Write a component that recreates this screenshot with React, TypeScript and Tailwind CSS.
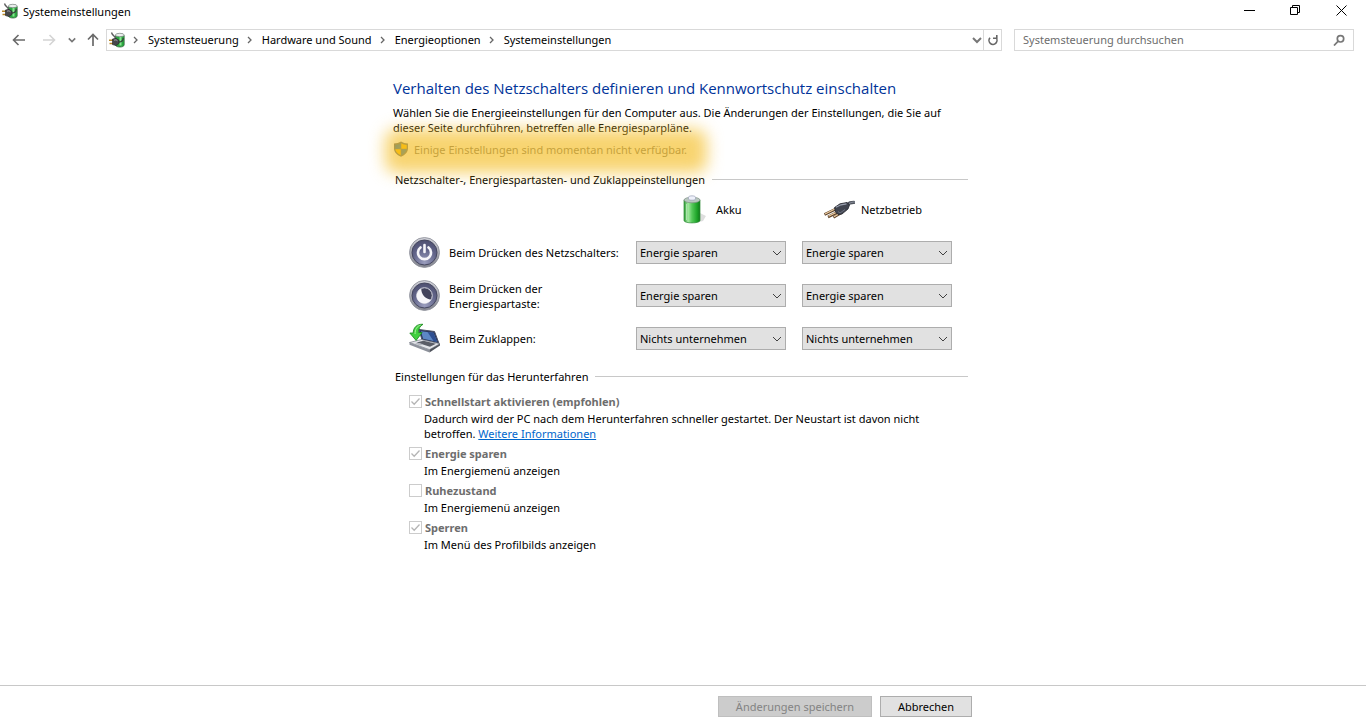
import { useState } from "react";
import type { ReactNode } from "react";

const breadcrumbs = ["Systemsteuerung", "Hardware und Sound", "Energieoptionen", "Systemeinstellungen"];

const actions = ["Nichts unternehmen", "Energie sparen", "Ruhezustand", "Herunterfahren"];

const PowerOptionsIcon = () => (
    <svg className="size-4 shrink-0" viewBox="0 0 16 16" aria-hidden="true">
        <path d="M6.500 3.500h8.700v9.300c0 3-8.700 3-8.700 0z" fill="#2aa63f" stroke="#2f5a37" strokeWidth=".7" />
        <path d="M10.500 4.500h2v9h-2z" fill="#86e68f" />
        <ellipse cx="10.800" cy="3" rx="4.400" ry="1.700" fill="#e9eeec" stroke="#777f7c" strokeWidth=".7" />
        <path d="M2.500.5C3 2.500 4 3.200 5 4s1.500 2 1.500 3" fill="none" stroke="#5c5c5c" strokeWidth="1.300" />
        <path d="M0 8.300h4M.5 11.500h4" stroke="#b8892b" strokeWidth="1.500" />
        <path d="M3.500 7 7 6.300l3 2v3l-3 2.300-3.500-1z" fill="#46474b" stroke="#222" strokeWidth=".6" />
        <path d="M10 10c2.500 0 4-1 4.300-4" fill="none" stroke="#37403a" strokeWidth="1.300" />
        <path d="m5 8.200 2-.4 1.500 1" fill="none" stroke="#a9a9ae" strokeWidth=".9" />
    </svg>
);

const ShieldIcon = () => (
    <svg className="h-4 w-4 shrink-0" viewBox="0 0 16 16" aria-hidden="true">
        <path d="M8 .5c2 1.300 4.200 1.900 7 2v5c0 3.500-2.800 6.500-7 8.300C3.800 14 1 11 1 7.500v-5c2.800-.1 5-.7 7-2z" fill="#5d6a72" />
        <path d="M7.700 2.200v5.500H2.300V3.900c2-.1 3.800-.6 5.400-1.700z" fill="#1f6fb5" />
        <path d="M8.300 2.200v5.500h5.400V3.900c-2-.1-3.800-.6-5.400-1.700z" fill="#ffbe00" />
        <path d="M7.700 8.300v5.900c-3.200-1.500-5.100-3.500-5.400-5.900z" fill="#ffbe00" />
        <path d="M8.300 8.300v5.900c3.200-1.500 5.100-3.500 5.400-5.900z" fill="#1f6fb5" />
    </svg>
);

const BatteryIcon = () => (
    <svg className="size-8 shrink-0" viewBox="0 0 32 32" aria-hidden="true">
        <defs>
            <linearGradient id="battery" x1="0" x2="1">
                <stop offset="0" stopColor="#2d9a35" />
                <stop offset=".25" stopColor="#a5eaa2" />
                <stop offset=".5" stopColor="#55c95a" />
                <stop offset=".8" stopColor="#1fa52a" />
                <stop offset="1" stopColor="#0f7a1a" />
            </linearGradient>
        </defs>
        <path d="m24 20 6 3-3 5-8 2z" fill="#000" opacity=".13" />
        <path d="M8 7v20.500c0 3.200 16 3.200 16 0V7z" fill="url(#battery)" stroke="#2b8a34" strokeWidth=".7" />
        <ellipse cx="16" cy="7" rx="8" ry="2.800" fill="#b9c7c0" stroke="#7f9085" strokeWidth=".7" />
        <path d="M12.500 6V4.200c0-1.800 7-1.800 7 0V6c0 1.600-7 1.600-7 0z" fill="#eef0fa" stroke="#9aa0b5" strokeWidth=".7" />
        <path d="M10.500 11v16" stroke="#d0f5cf" strokeWidth="1" opacity=".6" />
    </svg>
);

const PlugIcon = () => (
    <svg className="size-8 shrink-0" viewBox="0 0 32 32" aria-hidden="true">
        <path d="M14 15.500 1.500 21.500M17 18 5 24M19 19.500l-8.500 5" stroke="#5e432c" strokeWidth="2.600" />
        <path d="M14 15 2 21M17 17.500 5.500 23.300M19 19l-8 4.800" stroke="#efcfa2" strokeWidth="1.200" />
        <path d="M22 13c3-1.500 3-4 10-3.500" fill="none" stroke="#50555e" strokeWidth="3.200" />
        <path d="m11.500 14.500 5.500-3.700 7-1.300 2.500 2.500-1.500 4-6 5-4 .5-2.500-2.500z" fill="#40444f" stroke="#22252c" strokeWidth=".8" />
        <path d="m13 14.300 5-2.500 5.500-1" fill="none" stroke="#9aa0af" strokeWidth="1.200" />
        <path d="M15 18.500 17 20l5-3.500" fill="none" stroke="#6b7080" strokeWidth="1" />
        <path d="M26 10.500c2-1 3.500-1.500 6-1.500" fill="none" stroke="#9aa0af" strokeWidth=".8" />
    </svg>
);

const RoundButtonBase = ({ children }: { children: ReactNode }) => (
    <svg className="size-8 shrink-0" viewBox="0 0 32 32" aria-hidden="true">
        <defs>
            <linearGradient id="rim" x1="0" y1="0" x2="0" y2="1">
                <stop offset="0" stopColor="#d0d1d8" />
                <stop offset="1" stopColor="#83858f" />
            </linearGradient>
            <radialGradient id="face" cx=".5" cy=".9" r=".85">
                <stop offset="0" stopColor="#9a9dbd" />
                <stop offset=".6" stopColor="#62658a" />
                <stop offset="1" stopColor="#505273" />
            </radialGradient>
        </defs>
        <circle cx="15.500" cy="15.500" r="15" fill="url(#rim)" stroke="#8c8e98" strokeWidth=".8" />
        <circle cx="15.500" cy="15.500" r="12.500" fill="url(#face)" stroke="#44465f" strokeWidth="1" />
        {children}
    </svg>
);

const PowerButtonIcon = () => (
    <RoundButtonBase>
        <path d="M11.500 10.500a6.500 6.500 0 1 0 8 0" fill="none" stroke="#f6f6fa" strokeWidth="2.600" strokeLinecap="round" />
        <path d="M15.500 8v7" stroke="#f6f6fa" strokeWidth="2.600" strokeLinecap="round" />
    </RoundButtonBase>
);

const SleepButtonIcon = () => (
    <RoundButtonBase>
        <circle cx="15.500" cy="15.500" r="7.800" fill="#41435c" stroke="#d5d6df" strokeWidth="1" />
        <path d="M12.300 8.500c-5.300 2.700-6.200 9.500-2.200 13 3.800 3.200 9.500 2.200 12-1.800-5.500-.6-10-5-9.800-11.200z" fill="#f6f6fa" />
    </RoundButtonBase>
);

const LidIcon = () => (
    <svg className="size-8 shrink-0" viewBox="0 0 32 32" aria-hidden="true">
        <path d="m10 6.500 15.500 2 4.500 12-17-3.500z" fill="#28355b" stroke="#4a5066" strokeWidth="1" />
        <path d="m12 8.200 12.500 1.500 3.500 9-14-3z" fill="#5d87c5" />
        <path d="m18.500 9 6 .7 3.500 9-3.500-.7z" fill="#2e4f92" />
        <path d="m.5 19.500 12-3 18.500 4.200-10.500 6z" fill="#e2e4e9" stroke="#767a84" strokeWidth=".7" />
        <path d="m7.500 19.500 7-1.800 12.500 3-6 3z" fill="#5a5d67" />
        <path d="m6 20.800 5.500 1.600 3-1.200-6-1.400z" fill="#b5b8c0" />
        <path d="M.5 19.500v2.200l20 7.800v-2.800z" fill="#8d919b" />
        <path d="m20.500 26.700 10.500-6v1.700l-10.500 7z" fill="#50545d" />
        <path d="M14 1.300C8 .8 4.200 4.500 4.200 10H.8l6.300 7.500 6-8H9.300C9.400 6 11 3 14 1.300z" fill="#42d040" stroke="#16851a" strokeWidth=".8" />
        <path d="M11.500 2.200C8 3 6 6.500 6.100 11" fill="none" stroke="#a5f09a" strokeWidth="1" />
    </svg>
);

const ChevronDown = ({ className }: { className?: string }) => (
    <svg className={className} viewBox="0 0 10 10" fill="none" stroke="currentColor" aria-hidden="true">
        <path d="m1 3 4 4 4-4" />
    </svg>
);

const ActionSelect = ({ label, initial }: { label: string; initial: string }) => {
    const [value, setValue] = useState(initial);

    return (
        <div className="relative w-[150px]">
            <select
                aria-label={label}
                value={value}
                onChange={(e) => setValue(e.target.value)}
                className="block h-[23px] w-full appearance-none border border-[#adadad] bg-[#e1e1e1] pr-5 pl-[3px] text-[11px] leading-[15px]"
            >
                {actions.map((action) => (
                    <option key={action}>{action}</option>
                ))}
            </select>
            <ChevronDown className="pointer-events-none absolute top-[7px] right-1 size-[10px] text-[#404040]" />
        </div>
    );
};

const SectionTitle = ({ children }: { children: ReactNode }) => (
    <div className="flex items-center gap-[7px] pr-[5px] pl-[2px]">
        <h2>{children}</h2>
        <div className="h-px flex-1 bg-[#c8c8c8]" />
    </div>
);

const ButtonRow = ({ icon, label, initial }: { icon: ReactNode; label: string; initial: string }) => (
    <div className="grid h-[43px] grid-cols-[40px_187px_166px_150px] items-center">
        {icon}
        <p className="max-w-[175px] pr-1">{label}</p>
        <ActionSelect label={`${label} Akku`} initial={initial} />
        <ActionSelect label={`${label} Netzbetrieb`} initial={initial} />
    </div>
);

const ShutdownOption = ({
    id,
    label,
    checked,
    children,
}: {
    id: string;
    label: string;
    checked: boolean;
    children: ReactNode;
}) => (
    <div>
        <div className="flex h-[17px] items-center gap-[3px]">
            <span className="relative size-[13px]">
                <input
                    id={id}
                    type="checkbox"
                    defaultChecked={checked}
                    disabled
                    className="peer block size-[13px] appearance-none border border-[#cccccc] bg-white"
                />
                <svg
                    className="pointer-events-none absolute inset-0 hidden peer-checked:block"
                    viewBox="0 0 13 13"
                    fill="none"
                    stroke="#b5b5b5"
                    strokeWidth="1.300"
                    aria-hidden="true"
                >
                    <path d="m2.500 6.500 2.700 2.700L10.500 3.500" />
                </svg>
            </span>
            <label htmlFor={id} className="font-bold text-[#6d6d6d]">
                {label}
            </label>
        </div>
        <p className="mt-px pl-[15px]">{children}</p>
    </div>
);

const TitleBar = () => (
    <header className="flex h-6 items-start justify-between pr-[2px] pl-[2px]">
        <div className="flex items-center gap-[5px] pt-[3px]">
            <PowerOptionsIcon />
            <h1>Systemeinstellungen</h1>
        </div>
        <div className="flex h-[21px]">
            <button aria-label="Minimieren" className="flex w-[46px] items-center justify-center">
                <svg className="size-[11px]" viewBox="0 0 11 11" stroke="#000">
                    <path d="M0 5.500h11" />
                </svg>
            </button>
            <button aria-label="Verkleinern" className="flex w-[46px] items-center justify-center">
                <svg className="size-[11px]" viewBox="0 0 11 11" fill="none" stroke="#000">
                    <path d="M.5 2.500h7v7h-7zM2.500 2.500v-2h7v7h-2" />
                </svg>
            </button>
            <button aria-label="Schließen" className="flex w-[46px] items-center justify-center">
                <svg className="size-[11px]" viewBox="0 0 11 11" stroke="#000">
                    <path d="m.5.5 10 10M10.500.5l-10 10" />
                </svg>
            </button>
        </div>
    </header>
);

const AddressBar = () => (
    <nav className="mt-[5px] flex h-[22px] items-center pr-3 pl-3">
        <button aria-label="Zurück" className="text-[#6a6a6a]">
            <svg className="h-3 w-[14px]" viewBox="0 0 14 12" fill="none" stroke="currentColor" strokeWidth="1.600">
                <path d="M13 6H1.500M6.500 1l-5 5 5 5" />
            </svg>
        </button>
        <button aria-label="Vorwärts" disabled className="ml-4 text-[#d4d4d4]">
            <svg className="h-3 w-[14px]" viewBox="0 0 14 12" fill="none" stroke="currentColor" strokeWidth="1.600">
                <path d="M1 6h11.500M7.500 1l5 5-5 5" />
            </svg>
        </button>
        <button aria-label="Zuletzt besuchte Seiten" className="ml-3 text-[#777777]">
            <ChevronDown className="size-2 stroke-2" />
        </button>
        <button aria-label="Nach oben" className="ml-[11px] text-[#6a6a6a]">
            <svg className="h-[14px] w-3" viewBox="0 0 12 14" fill="none" stroke="currentColor" strokeWidth="1.700">
                <path d="M6 13V1.500M1 6.500l5-5 5 5" />
            </svg>
        </button>
        <div className="ml-[7px] flex h-full flex-1 items-center border border-[#d9d9d9] pl-[2px]">
            <PowerOptionsIcon />
            <ol className="flex flex-1 pb-px">
                {breadcrumbs.map((crumb) => (
                    <li key={crumb} className="flex items-center">
                        <svg
                            className="mr-2 ml-[7px] size-2"
                            viewBox="0 0 8 8"
                            fill="none"
                            stroke="#666"
                            strokeWidth="1.300"
                            aria-hidden="true"
                        >
                            <path d="m2 1 3 3-3 3" />
                        </svg>
                        <a href="#">{crumb}</a>
                    </li>
                ))}
            </ol>
            <button aria-label="Verlauf" className="mr-px text-[#777777]">
                <ChevronDown className="size-[10px] stroke-2" />
            </button>
            <button aria-label="Aktualisieren" className="flex h-full w-[18px] items-center justify-center border-l border-[#d9d9d9]">
                <svg className="size-3" viewBox="0 0 12 12" fill="none" stroke="#666" strokeWidth="1.600">
                    <path d="M3 3.700A4 4 0 1 0 8.800 3.500M9.800 1v3.300H6" />
                </svg>
            </button>
        </div>
        <div className="ml-3 flex h-full w-[340px] items-center border border-[#d9d9d9] pr-2 pl-2">
            <input
                type="search"
                aria-label="Systemsteuerung durchsuchen"
                placeholder="Systemsteuerung durchsuchen"
                className="h-full min-w-0 flex-1 pb-px outline-none placeholder:text-[#6d6d6d]"
            />
            <svg className="size-3" viewBox="0 0 12 12" fill="none" stroke="#777" strokeWidth="1.700" aria-hidden="true">
                <circle cx="7.500" cy="4.800" r="3.200" />
                <path d="M5.200 7.200 1 11.500" />
            </svg>
        </div>
    </nav>
);

const App = () => {
    return (
        <div className="flex min-h-screen flex-col bg-white font-['Noto_Sans','Open_Sans',sans-serif] text-[11px] leading-[15px] text-black">
            <TitleBar />
            <AddressBar />

            <main className="mx-auto w-full max-w-[580px] flex-1 pt-[26px]">
                <h2 className="font-['Open_Sans','Noto_Sans',sans-serif] text-[15px] leading-[22px] text-[#003399]">
                    Verhalten des Netzschalters definieren und Kennwortschutz einschalten
                </h2>
                <p className="mt-[6px] pr-1">
                    Wählen Sie die Energieeinstellungen für den Computer aus. Die Änderungen der Einstellungen, die Sie
                    auf dieser Seite durchführen, betreffen alle Energiesparpläne.
                </p>

                {/* gelb markierter Hinweis */}
                <div className="relative mt-[6px] flex h-4 w-fit items-center gap-[5px] text-[#6d6d6d]">
                    <ShieldIcon />
                    <a href="#">Einige Einstellungen sind momentan nicht verfügbar.</a>
                    <div className="pointer-events-none absolute -top-3 -right-5 -bottom-4 -left-2 rounded-xl bg-[#f4bd23]/65 blur-[8px]" />
                </div>

                <section className="mt-[15px]">
                    <SectionTitle>Netzschalter-, Energiespartasten- und Zuklappeinstellungen</SectionTitle>
                    <div className="mt-[6px] grid grid-cols-[283px_147px_150px] items-center">
                        <span />
                        <div className="flex items-center gap-2">
                            <BatteryIcon />
                            <span>Akku</span>
                        </div>
                        <div className="flex items-center gap-[6px]">
                            <PlugIcon />
                            <span>Netzbetrieb</span>
                        </div>
                    </div>
                    <div className="mt-[6px] pl-4">
                        <ButtonRow icon={<PowerButtonIcon />} label="Beim Drücken des Netzschalters:" initial="Energie sparen" />
                        <ButtonRow icon={<SleepButtonIcon />} label="Beim Drücken der Energiespartaste:" initial="Energie sparen" />
                        <ButtonRow icon={<LidIcon />} label="Beim Zuklappen:" initial="Nichts unternehmen" />
                    </div>
                </section>

                <section className="mt-[9px]">
                    <SectionTitle>Einstellungen für das Herunterfahren</SectionTitle>
                    <div className="mt-[9px] flex flex-col gap-1 pr-1 pl-4">
                        <ShutdownOption id="fast" label="Schnellstart aktivieren (empfohlen)" checked>
                            Dadurch wird der PC nach dem Herunterfahren schneller gestartet. Der Neustart ist davon nicht
                            betroffen.{" "}
                            <a href="#" className="text-[#0066cc] underline">
                                Weitere Informationen
                            </a>
                        </ShutdownOption>
                        <ShutdownOption id="sleep" label="Energie sparen" checked>
                            Im Energiemenü anzeigen
                        </ShutdownOption>
                        <ShutdownOption id="hibernate" label="Ruhezustand" checked={false}>
                            Im Energiemenü anzeigen
                        </ShutdownOption>
                        <ShutdownOption id="lock" label="Sperren" checked>
                            Im Menü des Profilbilds anzeigen
                        </ShutdownOption>
                    </div>
                </section>
            </main>

            <footer className="border-t border-[#c8c8c8] pt-[10px] pb-2">
                <div className="mx-auto flex max-w-[580px] justify-end gap-2 pr-px">
                    <button disabled className="h-[21px] w-[154px] border border-[#bfbfbf] bg-[#cccccc] text-[#838383]">
                        Änderungen speichern
                    </button>
                    <button className="h-[21px] w-[92px] border border-[#adadad] bg-[#e1e1e1]">Abbrechen</button>
                </div>
            </footer>
        </div>
    );
};

export default App;
